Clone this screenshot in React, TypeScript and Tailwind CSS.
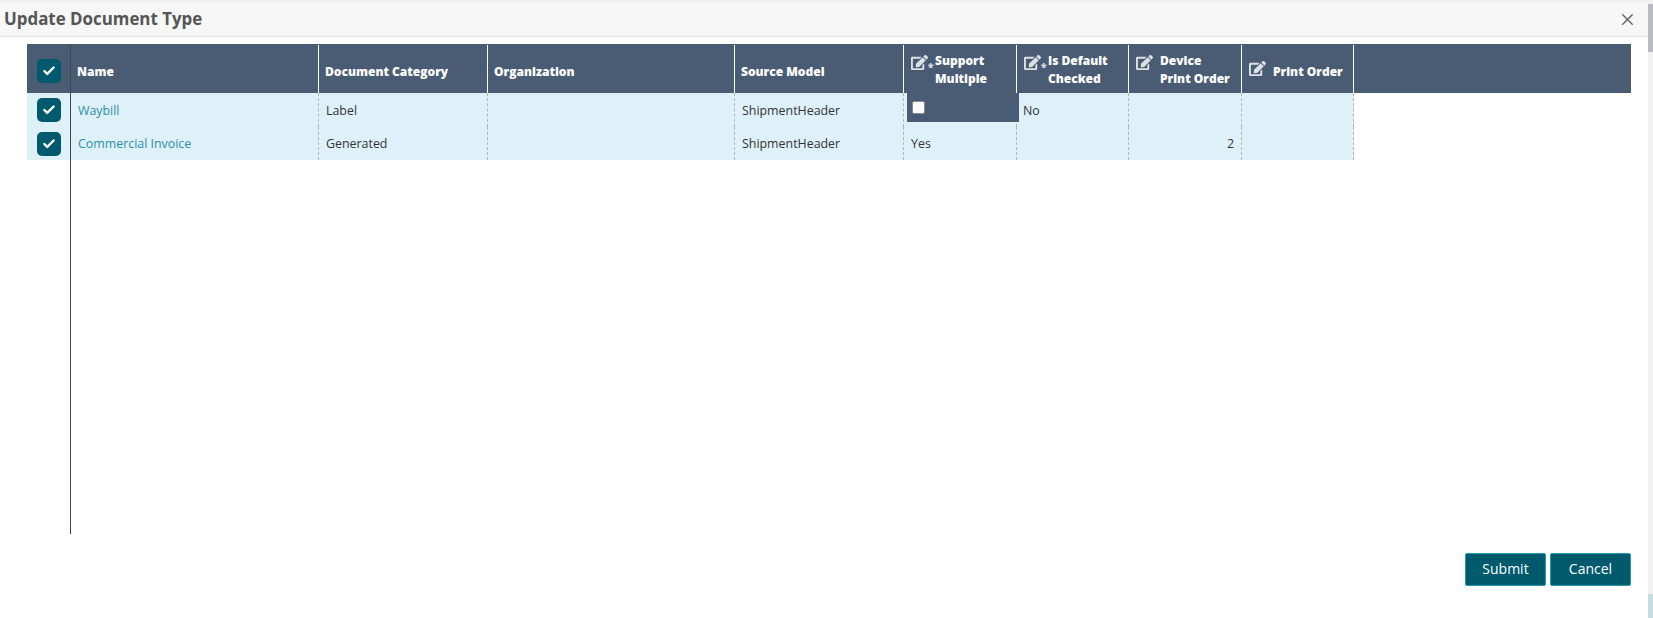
import { Check, X } from "lucide-react"
import { FaEdit } from "react-icons/fa"

type Column = {
	label: string[]
	width: string
	icon?: "required" | "plain"
}

const columns: Column[] = [
	{ label: ["Name"], width: "w-[248px]" },
	{ label: ["Document Category"], width: "w-[169px]" },
	{ label: ["Organization"], width: "w-[247px]" },
	{ label: ["Source Model"], width: "w-[169px]" },
	{ label: ["Support", "Multiple"], width: "w-[113px]", icon: "required" },
	{ label: ["Is Default", "Checked"], width: "w-[112px]", icon: "required" },
	{ label: ["Device", "Print Order"], width: "w-[113px]", icon: "plain" },
	{ label: ["Print Order"], width: "w-[112px]", icon: "plain" },
]

function CheckBox() {
	return (
		<div className="w-6 h-6 rounded-[5px] bg-[#005a6e] flex items-center justify-center">
			<Check size={14} strokeWidth={4} className="text-white" />
		</div>
	)
}

function HeaderCell({ column }: { column: Column }) {
	const isTwoLines = column.label.length > 1

	return (
		<div
			className={`${column.width} shrink-0 h-[48px] mt-px border-r border-white flex text-white text-[12px] font-extrabold leading-[18px] ${
				column.icon ? "pl-[7px]" : "pl-[6px]"
			} ${isTwoLines ? "pt-[7px]" : "pt-[5px] items-center"}`}>
			{column.icon && (
				<div
					className={`w-[24px] shrink-0 flex items-start ${
						isTwoLines ? "mt-[2px]" : "-mt-[6px]"
					}`}>
					<FaEdit size={17} className="text-[#dde1e6] shrink-0" />
					{column.icon === "required" && (
						<span className="text-[10px] leading-[10px] mt-[8px] text-[#dde1e6]">*</span>
					)}
				</div>
			)}
			<div>
				{column.label.map((line) => (
					<div key={line}>{line}</div>
				))}
			</div>
		</div>
	)
}

function Cell({
	width,
	children,
	className = "",
}: {
	width: string
	children?: React.ReactNode
	className?: string
}) {
	return (
		<div
			className={`${width} shrink-0 h-full border-r border-dashed border-[#b5b5b5] flex items-center px-[7px] pt-[2px] ${className}`}>
			{children}
		</div>
	)
}

export default function App() {
	return (
		<div className="h-[618px] w-[1653px] overflow-hidden bg-white flex flex-col font-['Open_Sans',sans-serif]">
			<div className="h-[2px] bg-[#f0f0f0] shrink-0" />

			<div className="flex-1 flex min-h-0">
				<div className="flex-1 flex flex-col min-w-0">
					<div className="h-[35px] shrink-0 bg-[#f7f7f7] border-b border-[#e3e3e3] flex items-center justify-between pl-[4px] pr-[11px]">
						<h1 className="text-[16.9px] font-bold text-[#555555]">
							Update Document Type
						</h1>
						<X size={19} strokeWidth={1.8} className="text-[#666666]" />
					</div>

					<div className="flex-1 flex flex-col pl-[27px] pr-[17px] pt-[7px]">
						<div className="flex h-[490px] shrink-0">
							<div className="w-[44px] shrink-0 border-r border-[#444444]">
								<div className="h-[49px] bg-[#4a5c74] flex items-end pl-[10px] pb-[10px]">
									<CheckBox />
								</div>
								<div className="h-[34px] bg-[#def1f9] flex items-center pl-[10px] pb-px">
									<CheckBox />
								</div>
								<div className="h-[33px] bg-[#def1f9] flex items-center pl-[10px]">
									<CheckBox />
								</div>
							</div>

							<div className="flex-1">
								<div className="flex h-[49px] bg-[#4a5c74]">
									{columns.map((column) => (
										<HeaderCell key={column.label.join(" ")} column={column} />
									))}
								</div>

								<div className="w-[1283px] h-[34px] flex bg-[#def1f9] text-[12.4px] text-[#333333]">
									<Cell width={columns[0].width} className="text-[#2b8ea8]">
										Waybill
									</Cell>
									<Cell width={columns[1].width}>Label</Cell>
									<Cell width={columns[2].width} />
									<Cell width={columns[3].width}>ShipmentHeader</Cell>
									<Cell width={columns[4].width} className="relative">
										<div className="absolute left-[3px] top-0 w-[112px] h-[29px] bg-[#4a5c74] pl-[5px] pt-[8px]">
											<div className="w-[13px] h-[13px] bg-white rounded-[2px] border border-[#8a8a8a]" />
										</div>
									</Cell>
									<Cell width={columns[5].width} className="pl-[6px]">
										No
									</Cell>
									<Cell width={columns[6].width} />
									<Cell width={columns[7].width} />
								</div>

								<div className="w-[1283px] h-[33px] flex bg-[#def1f9] text-[12.4px] text-[#333333]">
									<Cell width={columns[0].width} className="text-[#2b8ea8]">
										Commercial Invoice
									</Cell>
									<Cell width={columns[1].width}>Generated</Cell>
									<Cell width={columns[2].width} />
									<Cell width={columns[3].width}>ShipmentHeader</Cell>
									<Cell width={columns[4].width}>Yes</Cell>
									<Cell width={columns[5].width} />
									<Cell width={columns[6].width} className="justify-end">
										2
									</Cell>
									<Cell width={columns[7].width} />
								</div>
							</div>
						</div>

						<div className="flex justify-end gap-[4px] mt-[19px]">
							<button className="w-[81px] h-[33px] pb-[2px] bg-[#005a6e] border border-[#1d9ab5] rounded-[2px] text-white text-[14px]">
								Submit
							</button>
							<button className="w-[81px] h-[33px] pb-[2px] bg-[#005a6e] border border-[#1d9ab5] rounded-[2px] text-white text-[14px]">
								Cancel
							</button>
						</div>
					</div>
				</div>

				<div className="w-[5px] shrink-0 bg-[#f1f1f1] flex flex-col">
					<div className="h-[2px]" />
					<div className="h-[48px] bg-[#b8bcc2]" />
					<div className="flex-1" />
					<div className="h-[24px] bg-[#c6dbe0]" />
				</div>
			</div>
		</div>
	)
}
